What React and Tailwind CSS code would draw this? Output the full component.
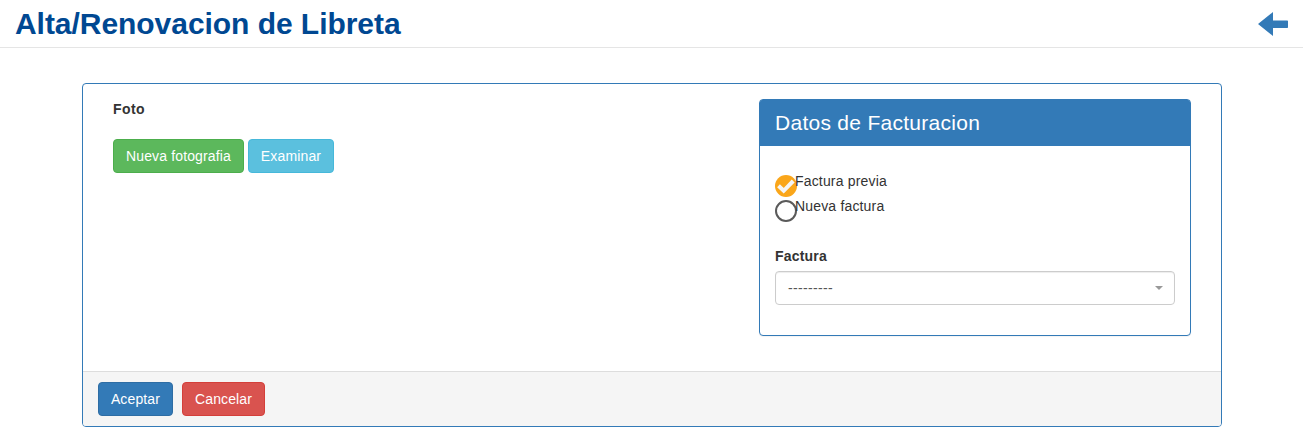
const buttonBase =
  'h-[34px] rounded-[4px] border text-center text-[14px] leading-5 text-white whitespace-nowrap';

function Header() {
  return (
    <header className="flex h-12 items-center justify-between border-b border-[#e5e5e5] px-[15px]">
      <h1 className="text-[30px] leading-[33px] font-bold tracking-[-0.045px] text-[#004892]">Alta/Renovacion de Libreta</h1>
      <a href="#" aria-label="Volver">
        <svg width="30" height="24" viewBox="0 0 30 24" fill="#337ab7" className="block">
          <path d="M0 12 15 0V8.5H29.3Q30 8.5 30 9.2V15.3Q30 16 29.3 16H15V24Z" />
        </svg>
      </a>
    </header>
  );
}

function RadioIcon({ checked }) {
  return (
    <svg width="22" height="22" viewBox="0 0 22 22" className="block shrink-0">
      {checked ? (
        <>
          <circle cx="11" cy="11" r="11" fill="#faa61a" />
          <path d="M3.5 10.8 8.7 15.8 18.2 6" fill="none" stroke="#f5f5f5" strokeWidth="4" />
        </>
      ) : (
        <circle cx="11" cy="11" r="10" fill="#fff" stroke="#5a5a5a" strokeWidth="2" />
      )}
    </svg>
  );
}

function RadioOption({ label, checked }) {
  return (
    <div role="radio" aria-checked={checked} className="flex h-[25px] items-start">
      <div className="mt-[4px] -mr-[2px]">
        <RadioIcon checked={checked} />
      </div>
      <span className="relative leading-5 tracking-[0.17px]">{label}</span>
    </div>
  );
}

function BillingPanel() {
  return (
    <section className="h-[237px] w-[432px] rounded-[4px] border border-[#337ab7] bg-white shadow-[0_1px_1px_rgba(0,0,0,0.05)]">
      <h2 className="flex h-[46px] items-center rounded-t-[2px] bg-[#337ab7] px-[15px] text-[21px] leading-6 tracking-[0.28px] text-white">
        Datos de Facturacion
      </h2>
      <div className="px-[15px] pt-[25px]">
        <div role="radiogroup">
          <RadioOption label="Factura previa" checked />
          <RadioOption label="Nueva factura" checked={false} />
        </div>
        <div className="mt-[25px] mb-[5px] leading-5 font-bold tracking-[0.2px]">Factura</div>
        <div className="flex h-[34px] items-center justify-between rounded-[4px] border border-[#ccc] pr-[11px] pl-3 text-[#555] shadow-[inset_0_1px_1px_rgba(0,0,0,0.075)]">
          <span className="tracking-[0.338px]">---------</span>
          <svg width="8" height="4" viewBox="0 0 8 4" fill="#999" className="block">
            <path d="M0 0H8L4 4Z" />
          </svg>
        </div>
      </div>
    </section>
  );
}

export default function App() {
  return (
    <div className="h-[439px] overflow-hidden bg-white font-['Liberation_Sans',Arial,sans-serif] text-[14px] leading-5 text-[#333]">
      <Header />
      <main className="mt-[35px] ml-[82px] flex h-[344px] w-[1140px] flex-col overflow-hidden rounded-[4px] border border-[#337ab7]">
        <div className="flex flex-1 items-start justify-between pt-[15px] pr-[30px] pl-[30px]">
          <div>
            <div className="font-bold tracking-[0.4px]">Foto</div>
            <div className="mt-5 flex gap-1">
              <button className={`${buttonBase} w-[131px] tracking-[0.14px] border-[#4cae4c] bg-[#5cb85c]`}>Nueva fotografia</button>
              <button className={`${buttonBase} w-[86px] tracking-[0.14px] border-[#46b8da] bg-[#5bc0de]`}>Examinar</button>
            </div>
          </div>
          <BillingPanel />
        </div>
        <footer className="flex h-[55px] gap-[9px] border-t border-[#ddd] bg-[#f5f5f5] px-[15px] py-[10px]">
          <button className={`${buttonBase} w-[75px] tracking-[0.14px] border-[#2e6da4] bg-[#337ab7]`}>Aceptar</button>
          <button className={`${buttonBase} w-[83px] tracking-[0.12px] border-[#d43f3a] bg-[#d9534f]`}>Cancelar</button>
        </footer>
      </main>
    </div>
  );
}
